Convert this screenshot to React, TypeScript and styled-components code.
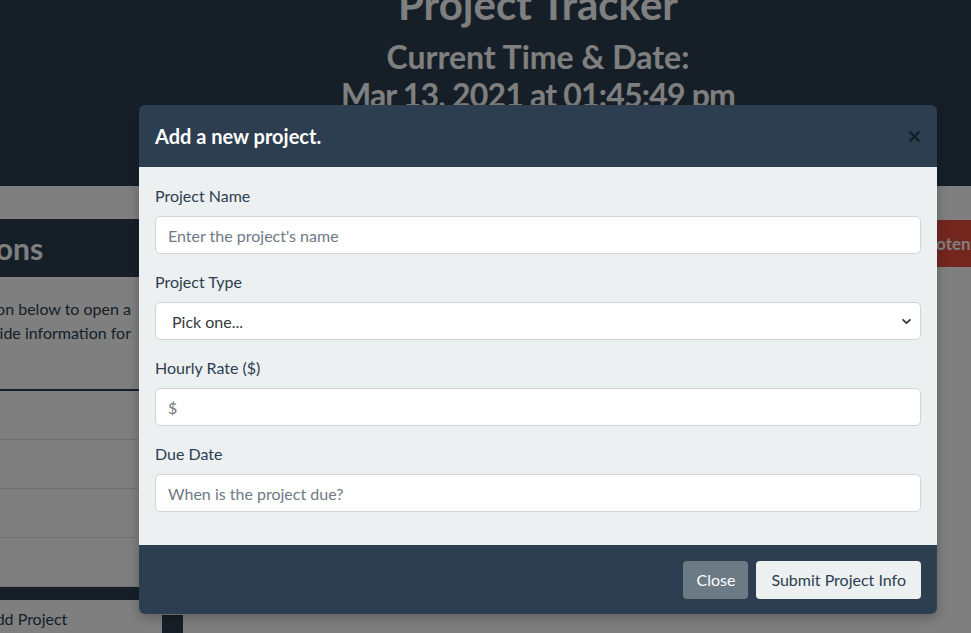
import React from 'react';
import styled, { createGlobalStyle } from 'styled-components';

const GlobalStyle = createGlobalStyle`
  html, body {
    margin: 0;
    padding: 0;
    overflow: hidden;
    background: #ffffff;
  }
  body {
    font-family: Lato, "Open Sans", sans-serif;
    color: #2c3e50;
  }
  * {
    box-sizing: border-box;
  }
`;

const Page = styled.div`
  position: relative;
  width: 1076px;
  height: 633px;
  overflow: hidden;
  background: #ffffff;
`;

const Header = styled.header`
  height: 186px;
  background: #2c3e50;
  color: #ffffff;
  text-align: center;
  overflow: hidden;
`;

const Title = styled.h1`
  margin: -21px 0 9px;
  font-size: 42px;
  line-height: 50px;
  font-weight: 700;
`;

const Clock = styled.h2<{ $tight?: boolean }>`
  margin: 0;
  font-size: 32px;
  line-height: 38px;
  font-weight: 700;
  letter-spacing: ${(p) => (p.$tight ? '-0.8px' : '0')};
`;

const Main = styled.main`
  display: flex;
  gap: 12px;
  padding-top: 33px;
`;

const SideColumn = styled.section`
  flex: 0 0 300px;
  margin-left: -150px;
`;

const CardHeader = styled.div`
  height: 58px;
  display: flex;
  align-items: center;
  padding-left: 34px;
  background: #2c3e50;
  color: #ffffff;
  font-size: 30px;
  font-weight: 700;
`;

const Intro = styled.p`
  margin: 0;
  padding: 20px 19px 44px 0;
  text-align: right;
  white-space: nowrap;
  font-size: 16px;
  line-height: 24px;
  color: #2c3e50;
  border-bottom: 2px solid #2c3e50;
`;

const ListRow = styled.div`
  height: 49px;
  border-bottom: 1px solid #dee2e6;

  &:last-of-type {
    border-bottom: none;
  }
`;

const CardFooter = styled.div`
  height: 13px;
  background: #2c3e50;
`;

const AddLink = styled.div`
  padding: 7px 0 0 0;
  margin-left: 135px;
  font-size: 16px;
  line-height: 24px;
  color: #2c3e50;
`;

const ContentColumn = styled.section`
  flex: 1;
  display: flex;
  flex-direction: column;
  align-items: flex-start;
`;

const DangerButton = styled.button`
  align-self: flex-end;
  height: 47px;
  margin-top: 1px;
  padding: 0 16px 0 12px;
  border: none;
  background: #e74c3c;
  color: #ffffff;
  font-family: inherit;
  font-size: 17px;
  font-weight: 700;
`;

const TableTab = styled.div`
  width: 21px;
  height: 40px;
  margin-top: 348px;
  background: #2c3e50;
`;

const Backdrop = styled.div`
  position: absolute;
  inset: 0;
  background: rgba(0, 0, 0, 0.5);
`;

const Dialog = styled.div`
  position: absolute;
  top: 105px;
  left: 139px;
  width: 798px;
  border-radius: 6px;
  overflow: hidden;
  box-shadow: 0 4px 12px rgba(0, 0, 0, 0.25);
`;

const DialogHeader = styled.div`
  display: flex;
  align-items: center;
  justify-content: space-between;
  height: 62px;
  padding: 0 16px;
  background: #2c3e50;
`;

const DialogTitle = styled.h5`
  margin: 0;
  font-size: 20px;
  line-height: 30px;
  font-weight: 700;
  color: #ffffff;
`;

const CloseX = styled.button`
  display: flex;
  align-items: center;
  justify-content: center;
  width: 24px;
  height: 24px;
  margin-right: -5px;
  padding: 0;
  border: none;
  background: transparent;
  opacity: 0.5;
`;

const DialogBody = styled.div`
  padding: 17px 16px 17px;
  background: #ecf0f1;
`;

const Field = styled.div`
  margin-bottom: 16px;
`;

const Label = styled.label`
  display: block;
  margin-bottom: 8px;
  font-size: 16px;
  line-height: 24px;
  color: #2c3e50;
`;

const TextInput = styled.input`
  display: block;
  width: 100%;
  height: 38px;
  padding: 6px 12px;
  border: 1px solid #ced4da;
  border-radius: 5px;
  background: #ffffff;
  font-family: inherit;
  font-size: 16px;
  color: #2c3e50;
  outline: none;

  &::placeholder {
    color: #6f7a85;
  }
`;

const SelectInput = styled.select`
  display: block;
  width: 100%;
  height: 38px;
  padding: 6px 36px 6px 16px;
  border: 1px solid #ced4da;
  border-radius: 5px;
  background-color: #ffffff;
  background-image: url("data:image/svg+xml,%3csvg xmlns='http://www.w3.org/2000/svg' viewBox='0 0 16 16'%3e%3cpath fill='none' stroke='%23343a40' stroke-linecap='round' stroke-linejoin='round' stroke-width='2.6' d='M3 5.5l5 5 5-5'/%3e%3c/svg%3e");
  background-repeat: no-repeat;
  background-position: right 8px center;
  background-size: 11px 11px;
  appearance: none;
  font-family: inherit;
  font-size: 16px;
  color: #343a40;
  outline: none;
`;

const DialogFooter = styled.div`
  display: flex;
  justify-content: flex-end;
  align-items: center;
  gap: 8px;
  height: 69px;
  padding: 0 16px;
  background: #2c3e50;
`;

const FooterButton = styled.button<{ $variant: 'muted' | 'light' }>`
  height: 38px;
  padding: 0 ${(p) => (p.$variant === 'muted' ? '13px' : '15px')};
  border: none;
  border-radius: 4px;
  font-family: inherit;
  font-size: 16px;
  background: ${(p) => (p.$variant === 'muted' ? '#6c7a86' : '#ecf0f1')};
  color: ${(p) => (p.$variant === 'muted' ? '#ffffff' : '#2c3e50')};
`;

const fields = [
  { label: "Project Name", placeholder: "Enter the project's name" },
  { label: 'Hourly Rate ($)', placeholder: '$' },
  { label: 'Due Date', placeholder: 'When is the project due?' },
];

export default function App() {
  return (
    <>
      <GlobalStyle />
      <Page>
        <Header>
          <Title>Project Tracker</Title>
          <Clock>Current Time &amp; Date:</Clock>
          <Clock $tight>Mar 13, 2021 at 01:45:49 pm</Clock>
        </Header>

        <Main>
          <SideColumn>
            <CardHeader>Instructions</CardHeader>
            <Intro>
              Click on the button below to open a
              <br />
              form so you can provide information for
            </Intro>
            <ListRow />
            <ListRow />
            <ListRow />
            <ListRow />
            <CardFooter />
            <AddLink>Add Project</AddLink>
          </SideColumn>

          <ContentColumn>
            <DangerButton>Potential Projects</DangerButton>
            <TableTab />
          </ContentColumn>
        </Main>

        <Backdrop />

        <Dialog>
          <DialogHeader>
            <DialogTitle>Add a new project.</DialogTitle>
            <CloseX aria-label="Close">
              <svg width="11" height="11" viewBox="0 0 16 16">
                <path d="M2 2l12 12M14 2L2 14" stroke="#000" strokeWidth="3.4" strokeLinecap="round" />
              </svg>
            </CloseX>
          </DialogHeader>

          <DialogBody>
            <Field>
              <Label>{fields[0].label}</Label>
              <TextInput placeholder={fields[0].placeholder} />
            </Field>
            <Field>
              <Label>Project Type</Label>
              <SelectInput defaultValue="">
                <option value="">Pick one...</option>
                <option value="web">Web Development</option>
                <option value="design">Design</option>
              </SelectInput>
            </Field>
            {fields.slice(1).map((f) => (
              <Field key={f.label}>
                <Label>{f.label}</Label>
                <TextInput placeholder={f.placeholder} />
              </Field>
            ))}
          </DialogBody>

          <DialogFooter>
            <FooterButton $variant="muted">Close</FooterButton>
            <FooterButton $variant="light">Submit Project Info</FooterButton>
          </DialogFooter>
        </Dialog>
      </Page>
    </>
  );
}
